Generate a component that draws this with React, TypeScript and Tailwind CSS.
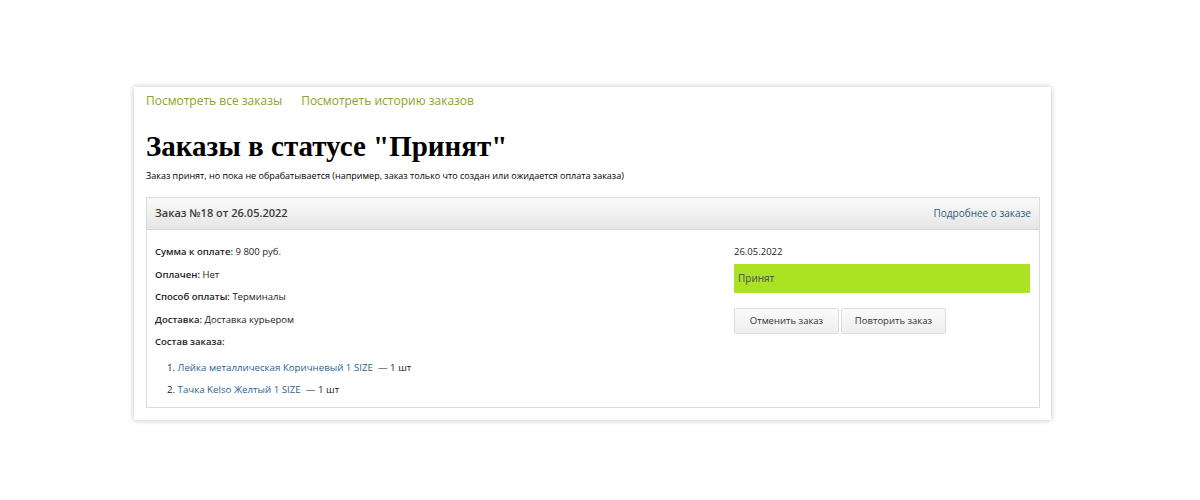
const items = [
  { name: 'Лейка металлическая Коричневый 1 SIZE', qty: '1 шт' },
  { name: 'Тачка Kelso Желтый 1 SIZE', qty: '1 шт' },
];

const fields = [
  { label: 'Сумма к оплате:', value: '9 800 руб.' },
  { label: 'Оплачен:', value: 'Нет' },
  { label: 'Способ оплаты:', value: 'Терминалы' },
  { label: 'Доставка:', value: 'Доставка курьером' },
];

export default function App() {
  return (
    <div className="min-h-[500px] bg-white pt-[87px] font-['Open_Sans',sans-serif]">
      <div className="ml-[134px] w-[917px] bg-white pr-[11px] pl-[12px] pb-[12px] shadow-[0_0_6px_rgba(0,0,0,0.25)]">
        <div className="flex gap-[19px] pt-[6px] text-[12px] leading-[16px] text-[#8aa524]">
          <a href="#">Посмотреть все заказы</a>
          <a href="#">Посмотреть историю заказов</a>
        </div>

        <h1 className="mt-[17px] font-['Liberation_Serif',serif] text-[29px] font-bold leading-[40px] text-black">
          Заказы в статусе "Принят"
        </h1>
        <p className="mt-[3px] text-[9px] leading-[14px] text-black">
          Заказ принят, но пока не обрабатывается (например, заказ только что создан или ожидается оплата заказа)
        </p>

        <div className="mt-[14px] border border-[#dcdcdc]">
          <div className="flex h-[32px] items-center justify-between border-b border-[#d6d6d6] bg-gradient-to-b from-[#fafafa] to-[#e6e6e6] pr-[8px] pl-[8px]">
            <span className="text-[11px] font-semibold text-[#3a3a3a]">Заказ №18 от 26.05.2022</span>
            <a href="#" className="text-[10px] text-[#2c5a78]">Подробнее о заказе</a>
          </div>

          <div className="grid grid-cols-[579px_296px] px-2 pt-[15px] pb-[10px]">
            <div className="text-[9.5px] text-[#222]">
              {fields.map((f) => (
                <p key={f.label} className="mb-[8.5px] leading-[14px]">
                  <span className="font-semibold">{f.label}</span> {f.value}
                </p>
              ))}
              <p className="leading-[14px] font-semibold">Состав заказа:</p>
              <ol className="mt-[12px] ml-[12px] text-[9.7px]">
                {items.map((it, i) => (
                  <li key={it.name} className="leading-[14px] not-last:mb-[8px]">
                    {i + 1}. <a href="#" className="text-[#2a6496]">{it.name}</a>&nbsp; — {it.qty}
                  </li>
                ))}
              </ol>
            </div>

            <div>
              <p className="text-[9.5px] leading-[14px] text-[#222]">26.05.2022</p>
              <div className="mt-[5px] flex h-[29px] items-center bg-[#abe323] px-1 text-[10px] text-[#4a4a4a]">
                Принят
              </div>
              <div className="mt-[15px] flex gap-[2px]">
                <button className="h-[26px] w-[105px] rounded-[2px] border border-[#dddddd] bg-gradient-to-b from-[#fafafa] to-[#eeeeee] text-[9.5px] text-[#333]">
                  Отменить заказ
                </button>
                <button className="h-[26px] w-[105px] rounded-[2px] border border-[#dddddd] bg-gradient-to-b from-[#fafafa] to-[#eeeeee] text-[9.5px] text-[#333]">
                  Повторить заказ
                </button>
              </div>
            </div>
          </div>
        </div>
      </div>
    </div>
  );
}
